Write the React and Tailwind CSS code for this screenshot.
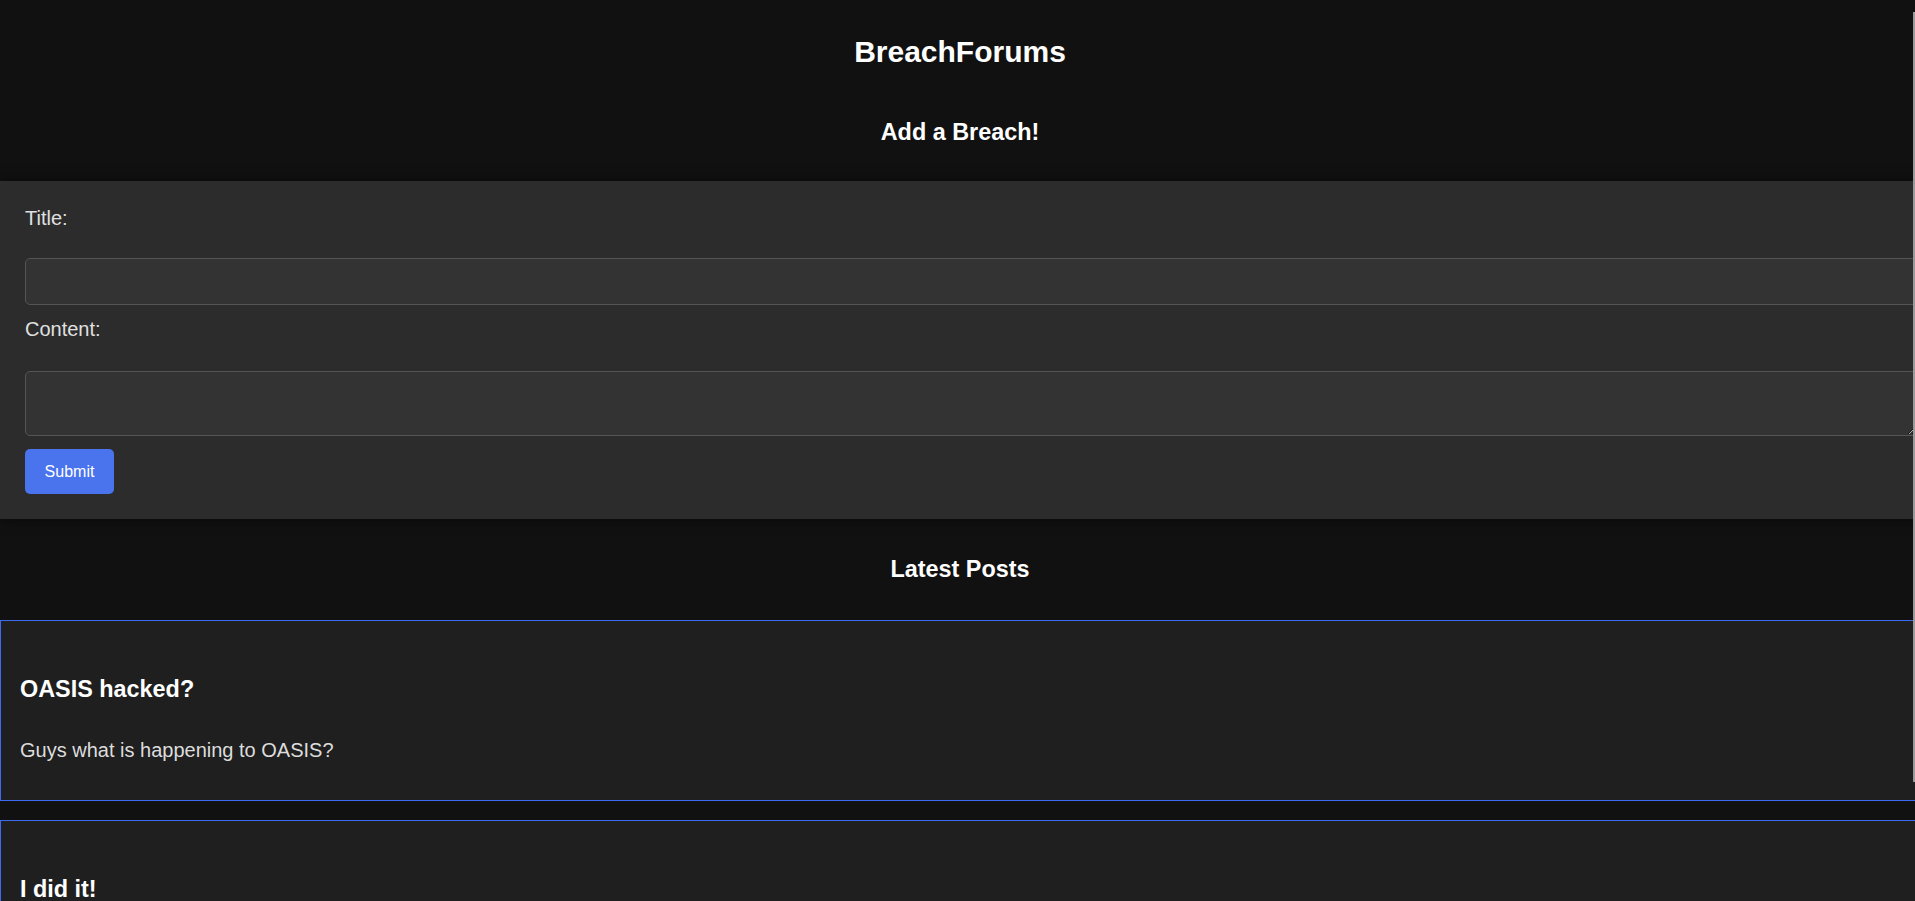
import { useState } from "react";

const POSTS = [
  { id: 1, title: "OASIS hacked?", content: "Guys what is happening to OASIS?" },
  { id: 2, title: "I did it!", content: "Finally got in." },
];

const PostCard = ({ title, content }) => (
  <div className="w-[1942px] border border-[#3d6af2] bg-[#1f1f1f] px-[19px] pt-[54px] pb-[38px]">
    <h3 className="text-[23.4px] leading-[28px] font-bold text-white">{title}</h3>
    <p className="mt-[35px] text-[20px] leading-[24px] text-[#dddddd]">{content}</p>
  </div>
);

export default function App() {
  const [title, setTitle] = useState("");
  const [content, setContent] = useState("");

  return (
    <div
      className="min-h-screen overflow-hidden bg-[#111111] text-white"
      style={{ fontFamily: '"Liberation Sans", Arial, sans-serif' }}
    >
      <div className="w-[1920px] pb-[60px]">
        {/* Header */}
        <h1 className="pt-[34px] text-center text-[30px] leading-[36px] font-bold">BreachForums</h1>
        <h3 className="mt-[48px] text-center text-[23.4px] leading-[28px] font-bold">Add a Breach!</h3>

        {/* Form */}
        <form
          onSubmit={(e) => e.preventDefault()}
          className="mt-[35px] w-[1942px] bg-[#2c2c2c] px-[25px] pt-[25px] pb-[25px] shadow-[0_0_12px_rgba(0,0,0,0.6)]"
        >
          <label className="block text-[20px] leading-[24px] text-[#e0e0e0]">Title:</label>
          <input
            value={title}
            onChange={(e) => setTitle(e.target.value)}
            className="mt-[28px] block h-[47px] w-full rounded-[5px] border border-[#555555] bg-[#333333] px-3 text-[20px] text-white outline-none"
          />
          <label className="mt-[12px] block text-[20px] leading-[24px] text-[#e0e0e0]">Content:</label>
          <textarea
            value={content}
            onChange={(e) => setContent(e.target.value)}
            className="mt-[30px] block h-[65px] w-full rounded-[5px] border border-[#555555] bg-[#333333] px-3 text-[20px] text-white outline-none"
          />
          <button
            type="submit"
            className="mt-[13px] h-[45px] w-[89px] rounded-[5px] bg-[#4a73ee] text-[16px] text-white"
          >
            Submit
          </button>
        </form>

        {/* Posts */}
        <h3 className="mt-[36px] text-center text-[23.4px] leading-[28px] font-bold">Latest Posts</h3>
        <div className="mt-[37px] flex flex-col gap-[19px]">
          {POSTS.map((p) => (
            <PostCard key={p.id} title={p.title} content={p.content} />
          ))}
        </div>
      </div>

      {/* scrollbar thumb */}
      <div className="fixed right-0 top-[12px] h-[770px] w-[2px] bg-[#9a9a9a]" />
    </div>
  );
}
